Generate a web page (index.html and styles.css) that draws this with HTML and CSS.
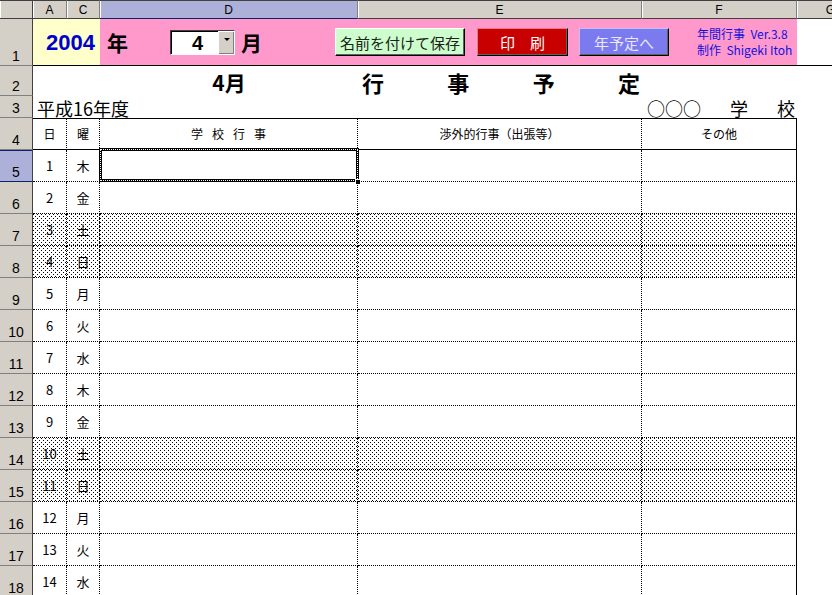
FILE: index.html
```html
<!DOCTYPE html>
<html lang="ja">
<head>
<meta charset="utf-8">
<title>年間行事</title>
<link rel="stylesheet" href="styles.css">
</head>
<body>
<div class="sheet">
  <div class="ch corner"></div>
  <div class="ch">A</div>
  <div class="ch">C</div>
  <div class="ch ch-sel">D</div>
  <div class="ch">E</div>
  <div class="ch">F</div>
  <div class="ch">G</div>

  <div class="rh">1</div>
  <div class="year">2004</div>
  <div class="ctrl">
    <span class="big nen">年</span>
    <div class="combo"><span class="combo-val">4</span><span class="combo-btn"><span class="arrow"></span></span></div>
    <span class="big tsuki">月</span>
    <button class="btn btn-save">名前を付けて保存</button>
    <button class="btn btn-print">印　刷</button>
    <button class="btn btn-year">年予定へ</button>
    <div class="credit"><div>年間行事&nbsp; Ver.3.8</div><div>制作&nbsp; Shigeki Itoh</div></div>
  </div>
  <div class="g1"></div>

  <div class="rh">2</div>
  <div class="span3"></div>
  <div class="title-month">4月</div>
  <div class="title-main"><span>行</span><span>事</span><span>予</span><span>定</span></div>
  <div></div>
  <div></div>

  <div class="rh">3</div>
  <div class="era">平成16年度</div>
  <div class="school"><span>○○○</span><span>学</span><span>校</span></div>
  <div></div>

  <div class="rh">4</div>
  <div class="c hd">日</div>
  <div class="c hd">曜</div>
  <div class="c hd"><span class="spaced">学校行事</span></div>
  <div class="c hd">渉外的行事（出張等）</div>
  <div class="c hd f">その他</div>
  <div></div>

  <div class="rh rh-sel">5</div>
  <div class="c">1</div><div class="c">木</div><div class="c sel"><span class="handle"></span></div><div class="c"></div><div class="c f"></div><div></div>

  <div class="rh">6</div>
  <div class="c">2</div><div class="c">金</div><div class="c"></div><div class="c"></div><div class="c f"></div><div></div>

  <div class="rh">7</div>
  <div class="c sh">3</div><div class="c sh">土</div><div class="c sh"></div><div class="c sh"></div><div class="c f sh"></div><div></div>

  <div class="rh">8</div>
  <div class="c sh">4</div><div class="c sh">日</div><div class="c sh"></div><div class="c sh"></div><div class="c f sh"></div><div></div>

  <div class="rh">9</div>
  <div class="c">5</div><div class="c">月</div><div class="c"></div><div class="c"></div><div class="c f"></div><div></div>

  <div class="rh">10</div>
  <div class="c">6</div><div class="c">火</div><div class="c"></div><div class="c"></div><div class="c f"></div><div></div>

  <div class="rh">11</div>
  <div class="c">7</div><div class="c">水</div><div class="c"></div><div class="c"></div><div class="c f"></div><div></div>

  <div class="rh">12</div>
  <div class="c">8</div><div class="c">木</div><div class="c"></div><div class="c"></div><div class="c f"></div><div></div>

  <div class="rh">13</div>
  <div class="c">9</div><div class="c">金</div><div class="c"></div><div class="c"></div><div class="c f"></div><div></div>

  <div class="rh">14</div>
  <div class="c sh">10</div><div class="c sh">土</div><div class="c sh"></div><div class="c sh"></div><div class="c f sh"></div><div></div>

  <div class="rh">15</div>
  <div class="c sh">11</div><div class="c sh">日</div><div class="c sh"></div><div class="c sh"></div><div class="c f sh"></div><div></div>

  <div class="rh">16</div>
  <div class="c">12</div><div class="c">月</div><div class="c"></div><div class="c"></div><div class="c f"></div><div></div>

  <div class="rh">17</div>
  <div class="c">13</div><div class="c">火</div><div class="c"></div><div class="c"></div><div class="c f"></div><div></div>

  <div class="rh">18</div>
  <div class="c">14</div><div class="c">水</div><div class="c"></div><div class="c"></div><div class="c f"></div><div></div>
</div>
</body>
</html>
```

FILE: styles.css
```css
* { box-sizing: border-box; margin: 0; padding: 0; }
html, body { width: 832px; height: 595px; overflow: hidden; background: #fff; }
body { font-family: "Noto Sans CJK JP", "Liberation Sans", sans-serif; color: #000; }

.sheet {
  display: grid;
  grid-template-columns: 33px 34px 33px 258px 284px 155px 68px;
  grid-template-rows: 19px 47px 30px 22px;
  grid-auto-rows: 32px;
  width: 905px;
}

/* column headers */
.ch {
  background: #d4d0c8;
  border-top: 1px solid #404040;
  border-bottom: 1px solid #404040;
  border-right: 1px solid #808080;
  box-shadow: inset 1px 0 0 #fff;
  font: 12px/1 "Liberation Sans", sans-serif;
  display: flex;
  align-items: center;
  justify-content: center;
  padding-top: 1px;
}
.ch.corner { border-right-color: #404040; }
.ch-sel { background: #adb1da; border-bottom-color: #0a246a; }

/* row headers */
.rh {
  background: #d4d0c8;
  border-right: 1px solid #404040;
  border-bottom: 1px solid #808080;
  display: flex;
  align-items: flex-end;
  justify-content: center;
  font: 14px/1 "Liberation Sans", sans-serif;
  padding-bottom: 2px;
}
.rh-sel { background: #adb1da; border-bottom-color: #0a246a; box-shadow: inset 0 1px 0 #0a246a; }

/* row 1 */
.year {
  grid-column: 2 / 4;
  background: #ffffcc;
  border-bottom: 1px solid #000;
  color: #0000cc;
  font: bold 22px/1 "Liberation Sans", sans-serif;
  display: flex;
  align-items: center;
  justify-content: flex-end;
  padding: 2px 5px 0 0;
}
.ctrl {
  grid-column: 4 / 7;
  background: #ff99cc;
  border-bottom: 1px solid #000;
  display: flex;
  align-items: center;
}
.g1 { border-bottom: 1px solid #000; }
.big { font-weight: bold; font-size: 21px; line-height: 1; }
.nen { margin-left: 7px; }
.combo {
  margin-left: 42px;
  width: 65px;
  height: 25px;
  display: flex;
  background: #fff;
  border-top: 1px solid #404040;
  border-left: 1px solid #404040;
  border-right: 1px solid #fff;
  border-bottom: 1px solid #fff;
  box-shadow: inset 1px 1px 0 #000;
}
.combo-val {
  flex: 1;
  font: bold 20px/1 "Liberation Sans", sans-serif;
  display: flex;
  align-items: center;
  justify-content: flex-end;
  padding: 2px 15px 0 0;
}
.combo-btn {
  width: 16px;
  background: #d4d0c8;
  border-left: 1px solid #fff;
  border-top: 1px solid #fff;
  box-shadow: inset -1px -1px 0 #808080;
  display: flex;
  justify-content: center;
  padding-top: 6px;
}
.arrow { width: 0; height: 0; border-left: 3px solid transparent; border-right: 3px solid transparent; border-top: 3px solid #000; }
.tsuki { margin-left: 6px; }

.btn {
  height: 28px;
  font: 15px/1 "Noto Sans CJK JP", sans-serif;
  border: 1px solid;
  border-color: #fff #000 #000 #fff;
  box-shadow: inset -1px -1px 0 #606060;
  display: flex;
  align-items: center;
  justify-content: center;
}
.btn-save { margin-left: 73px; width: 130px; background: #ccffcc; color: #202020; }
.btn-print { margin-left: 12px; width: 91px; background: #c80000; color: #fff; border-color: #e08080 #000 #000 #e08080; }
.btn-year { margin-left: 11px; width: 90px; background: #7b7bef; color: #e8e8ff; border-color: #c0c0ff #000 #000 #c0c0ff; }
.credit {
  margin-left: 28px;
  color: #1010e0;
  font-size: 12px;
  line-height: 16px;
  white-space: nowrap;
}

/* row 2 */
.span3 { grid-column: 2 / 4; }
.title-month {
  font-weight: bold;
  font-size: 21px;
  line-height: 1;
  display: flex;
  align-items: flex-end;
  justify-content: center;
  padding-bottom: 3px;
}
.title-main {
  font-weight: bold;
  font-size: 22px;
  line-height: 1;
  display: flex;
  align-items: flex-end;
  justify-content: space-between;
  padding: 0 2px 3px 4px;
}

/* row 3 */
.era {
  grid-column: 2 / 6;
  font-size: 18px;
  line-height: 1;
  display: flex;
  align-items: flex-end;
  padding: 0 0 1px 4px;
  white-space: nowrap;
}
.school {
  font-size: 18px;
  line-height: 1;
  display: flex;
  align-items: flex-end;
  justify-content: space-between;
  padding: 0 2px 1px 5px;
}

/* table */
.c {
  border-right: 1px dotted #000;
  border-bottom: 1px dotted #000;
  display: flex;
  align-items: center;
  justify-content: center;
  font: 13px/1 "Noto Sans CJK JP", "Liberation Sans", sans-serif;
  background: #fff;
}
.c.f { border-right: 1px solid #000; }
.c.hd { border-top: 1px solid #000; border-bottom: 1px solid #000; font-size: 12px; }
.spaced { letter-spacing: 9px; margin-right: -9px; }
.sh {
  background-color: #fff;
  background-image: url("data:image/svg+xml,%3Csvg xmlns='http://www.w3.org/2000/svg' width='4' height='4' shape-rendering='crispEdges'%3E%3Crect x='0' y='0' width='1' height='1'/%3E%3Crect x='2' y='2' width='1' height='1'/%3E%3C/svg%3E");
  background-size: 4px 4px;
  background-repeat: repeat;
}
.sel { position: relative; }
.sel::after {
  content: "";
  position: absolute;
  left: -1px; top: -2px; right: -2px; bottom: -1px;
  border: 3px solid #000;
}
.sel::before {
  content: "";
  position: absolute;
  left: 0; top: -1px; right: -1px; bottom: 0;
  border: 1px dotted #fff;
  z-index: 1;
}
.handle {
  position: absolute;
  right: -4px; bottom: -4px;
  width: 6px; height: 6px;
  background: #000;
  border: 1px solid #fff;
  z-index: 2;
}
```
